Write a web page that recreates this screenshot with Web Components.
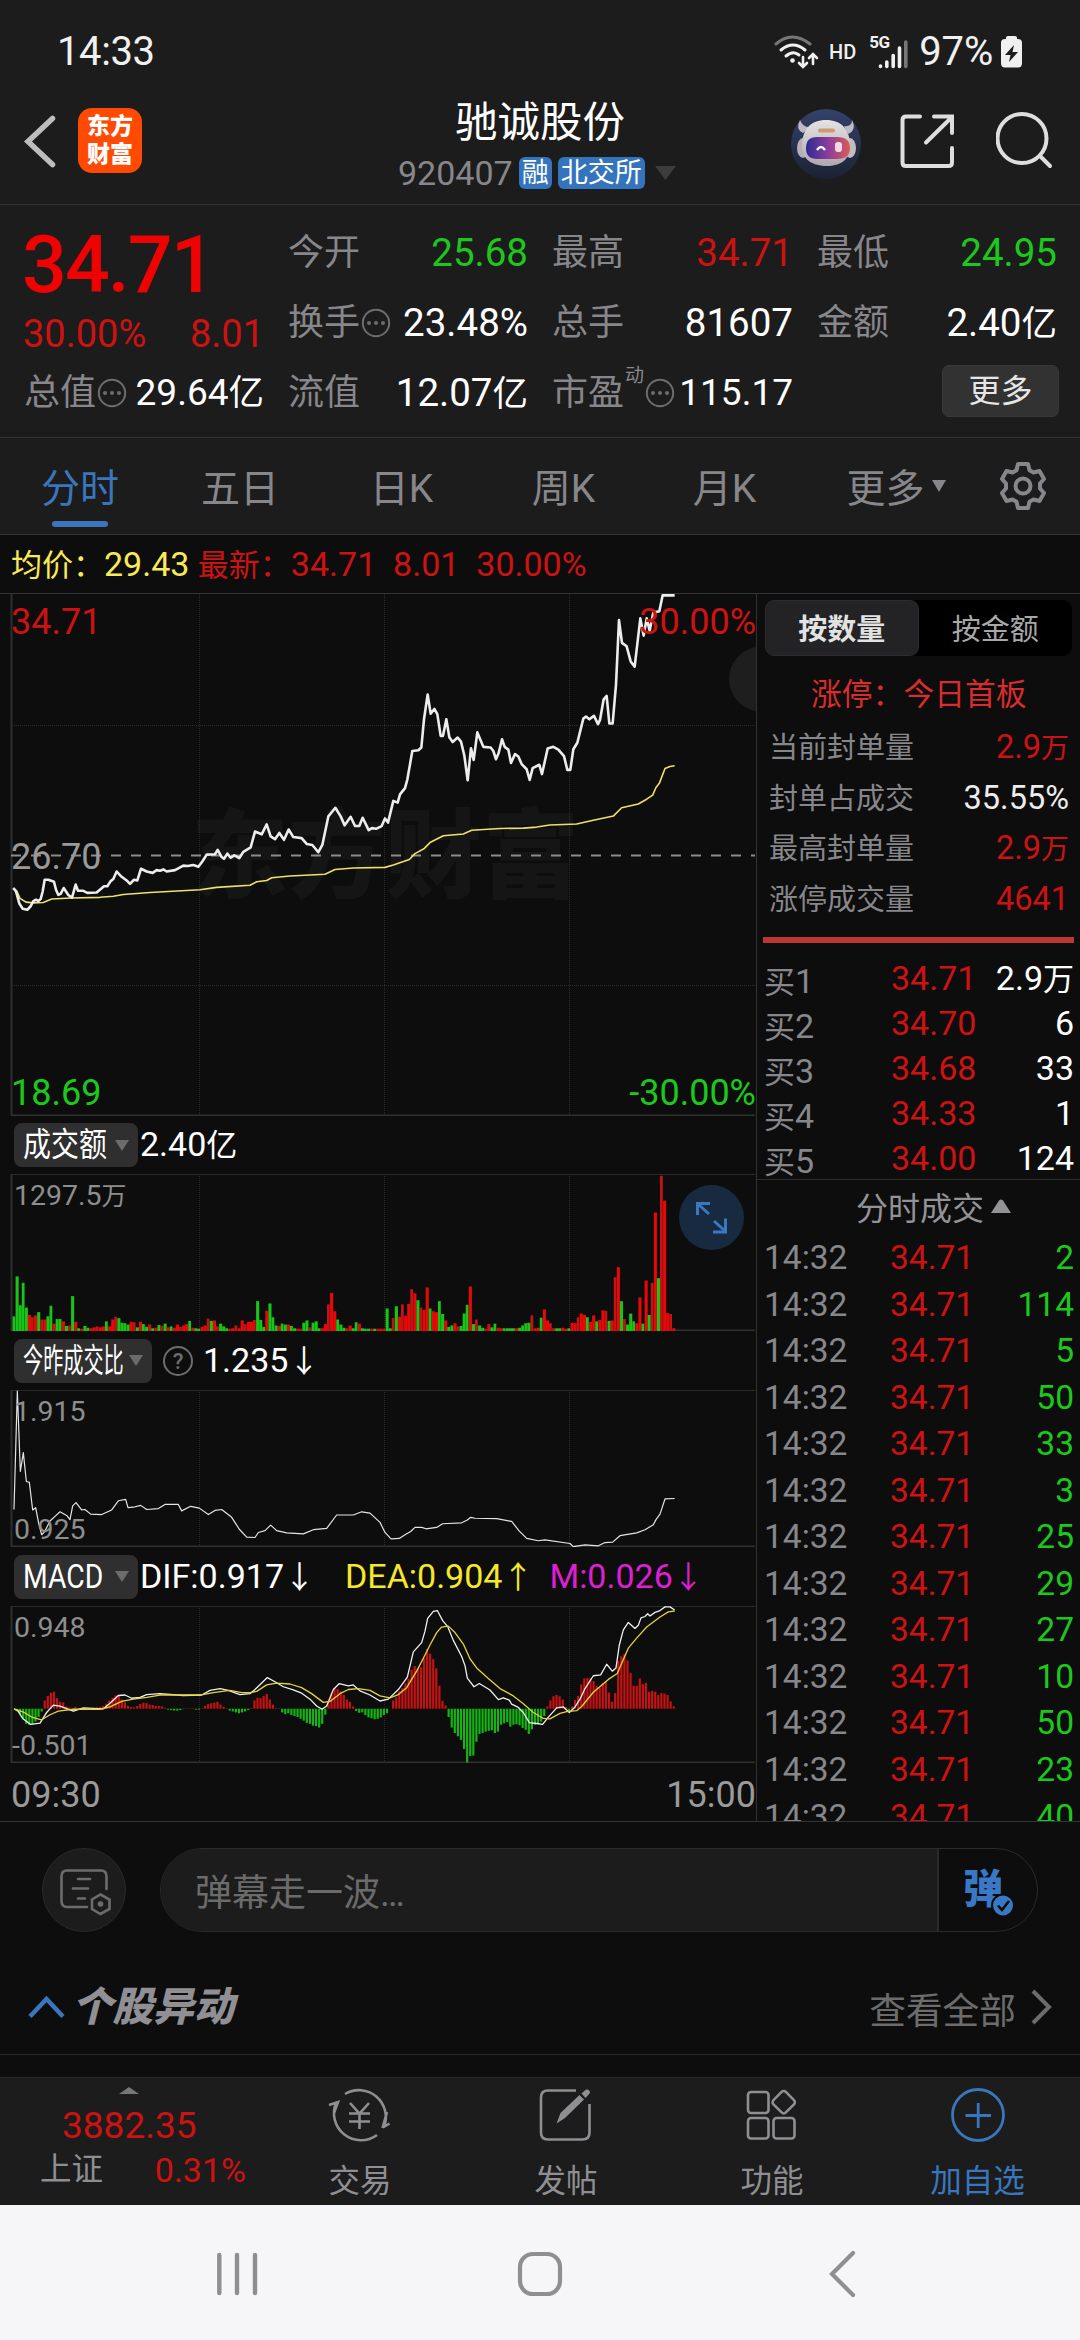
<!DOCTYPE html>
<html lang="zh-CN">
<head>
<meta charset="utf-8">
<title>驰诚股份 920407</title>
<style>
    html, body {
        margin: 0;
        background: #0d0d0d;
    }

    body {
        width: 1080px;
        height: 2340px;
        overflow: hidden;
        font-family: Roboto, "Noto Sans CJK SC", sans-serif;
        color: #fff;
        --panel: #1c1c1c;
        --line: #333335;
        --gray: #87878b;
        --red: #cd1212;
        --green: #1cc81c;
        --blue: #3a76bd;
    }

    main {
        display: grid;
        grid-template-columns: 757px 323px;
        height: 1227px;
        border-bottom: 1px solid var(--line);
    }
</style>
</head>
<body>
    <status-bar></status-bar>
    <stock-header name="驰诚股份" code="920407"></stock-header>
    <quote-panel></quote-panel>
    <period-tabs></period-tabs>
    <price-info></price-info>
    <main>
        <chart-column></chart-column>
        <order-book></order-book>
    </main>
    <danmu-bar></danmu-bar>
    <section-title more="查看全部">个股异动</section-title>
    <tab-bar></tab-bar>
    <nav-bar></nav-bar>

<script>
// Small base class: every element clones its own template into an open shadow root
class BaseElement extends HTMLElement {
    constructor() {
        super();
        this.attachShadow({mode: 'open'});
        const template = document.createElement('template');
        template.innerHTML = this.constructor.html;
        this.shadowRoot.appendChild(template.content.cloneNode(true));
    }

    $(selector) {
        return this.shadowRoot.querySelector(selector);
    }
}

// Chinese units are set a little smaller than the digits before them
const withUnit = (text) => text.replace(/[亿万]/, '<small>$&</small>');

class StatusBar extends BaseElement {
    static html = `
        <style>
            :host {
                display: flex;
                align-items: center;
                box-sizing: border-box;
                height: 92px;
                padding: 11px 57px 0 57px;
                background: var(--panel);
                color: #f0f0f0;
                font-size: 40px;
                line-height: 48px;
            }
            time { flex: 1; letter-spacing: -.4px; }
            svg { display: block; }
            .hd { font-size: 20px; font-weight: 500; margin: 0 13px 0 10px; }
            .level { margin: 0 8px 0 11px; letter-spacing: -.2px; }
            .cell { display: grid; }
            .cell > * { grid-area: 1 / 1; }
            .cell span { font-size: 17px; font-weight: 700; line-height: 20px; margin-top: -2px; letter-spacing: -.6px; }
        </style>
        <time>14:33</time>
        <svg width="46" height="36" viewBox="769 33 46 36" fill="none" stroke="#f0f0f0" stroke-width="3" stroke-linecap="round">
            <path d="M772 43Q788 29 806 43" stroke="#777"/>
            <path d="M777 49Q789 39 801 49M782 55Q789 49 795 54"/>
            <circle cx="788.500" cy="59.500" r="2.300" fill="#f0f0f0" stroke="none"/>
            <path d="M799 56V65M795 62L799 66L803 62M809 63V54M805 57L809 53L813 57" stroke-width="2.600"/>
        </svg>
        <span class="hd">HD</span>
        <div class="cell">
            <span>5G</span>
            <svg width="39" height="36" viewBox="863 33 39 36" fill="none" stroke="#f0f0f0" stroke-width="3.600" stroke-linecap="round">
                <path d="M874.500 65V65.500M880.800 61V65.500M887.200 54.500V65.500M893.500 47V65.500"/>
                <path d="M899.800 41V65.500" stroke="#777"/>
            </svg>
        </div>
        <span class="level">97%</span>
        <svg width="21" height="34" viewBox="1002 34 21 34">
            <path d="M1007 38V36.500Q1007 35 1009 35H1016Q1018 35 1018 36.500V38H1019Q1023 38 1023 42V62Q1023 66.500 1019 66.500H1006Q1002 66.500 1002 62V42Q1002 38 1006 38Z" fill="#f0f0f0"/>
            <path d="M1015 44L1006 54H1011.500L1010 61L1019 51H1013.500Z" fill="#1c1c1c"/>
        </svg>
    `;

    connectedCallback() {
        this.style.paddingRight = '58px';
    }
}

class StockHeader extends BaseElement {
    static html = `
        <style>
            :host {
                display: grid;
                grid-template-columns: 348px 1fr 348px;
                box-sizing: border-box;
                height: 113px;
                border-bottom: 1px solid var(--line);
                background: var(--panel);
            }
            svg { display: block; }
            .left { display: flex; align-items: flex-start; padding: 16px 0 0 22px; }
            .logo {
                display: grid;
                align-content: center;
                width: 64px;
                height: 65px;
                margin-left: 21px;
                border-radius: 14px;
                background: #ff4a03;
                font-size: 23px;
                font-weight: 900;
                line-height: 27.500px;
                text-align: center;
            }
            .title { text-align: center; padding-top: 6px; }
            h1 { margin: 0; font-size: 42.500px; font-weight: 400; line-height: 50px; }
            .sub { display: flex; align-items: center; margin: 8px 0 0 50px; height: 34px; }
            .code { font-size: 34px; color: var(--gray); margin-right: 6px; }
            .tag {
                height: 32px;
                margin-right: 6px;
                padding: 0 3px;
                border-radius: 6px;
                background: #3474bd;
                font-size: 27px;
                line-height: 32px;
            }
            .sub svg { margin-left: 4px; }
            .right { display: flex; gap: 37px; padding: 16px 0 0 59px; }
        </style>
        <div class="left">
            <svg width="35" height="65" viewBox="22 108 35 65"><path d="M52.500 118.500L28 141.500L52.500 164.500" fill="none" stroke="#bdbdbd" stroke-width="5.500" stroke-linecap="round"/></svg>
            <div class="logo"><span>东方</span><span>财富</span></div>
        </div>
        <div class="title">
            <h1></h1>
            <div class="sub">
                <span class="code"></span>
                <span class="tag">融</span>
                <span class="tag">北交所</span>
                <svg width="21" height="14"><path d="M0 0H21L10.500 14Z" fill="#3c3c3c"/></svg>
            </div>
        </div>
        <div class="right">
            <svg width="72" height="72" viewBox="0 0 72 72">
                <defs>
                    <linearGradient id="sky" x2="0" y2="1"><stop stop-color="#33426a"/><stop offset="1" stop-color="#1b2233"/></linearGradient>
                    <linearGradient id="visor"><stop stop-color="#2b2a94"/><stop offset=".5" stop-color="#8a3d9c"/><stop offset="1" stop-color="#dd5a56"/></linearGradient>
                    <linearGradient id="shell" x2="0" y2="1"><stop stop-color="#e6e2e2"/><stop offset="1" stop-color="#aea8ae"/></linearGradient>
                </defs>
                <circle cx="35" cy="36" r="35" fill="url(#sky)"/>
                <path d="M12 25Q4 21 9 12Q12 20 20 19M53 18Q61 19 61 12Q66 22 57 26" fill="#bfbac3"/>
                <ellipse cx="12" cy="40" rx="6" ry="10" fill="#b5b0b6"/>
                <ellipse cx="59" cy="40" rx="6" ry="10" fill="#c2bdc0"/>
                <path d="M35 12C50 12 59 21 59 38C59 52 49 58 36 58C22 58 11 52 11 38C11 21 20 12 35 12Z" fill="url(#shell)"/>
                <rect x="27" y="20.500" width="17" height="4" rx="2" fill="#cf9a70"/>
                <path d="M26 29H46Q59 29 59 40Q59 51 46 51H26Q15 51 15 40Q15 29 26 29Z" fill="url(#visor)"/>
                <path d="M26 42Q30 36 34 42" fill="none" stroke="#fff" stroke-width="2.400"/>
                <rect x="44" y="34" width="7" height="10" rx="3" fill="#f3d9e8"/>
            </svg>
            <svg style="margin-left:-1px" width="56" height="65" viewBox="899 108 56 65" fill="none" stroke="#dedede" stroke-width="4" stroke-linecap="round">
                <path d="M920 116.500H906Q902.500 116.500 902.500 120V162.500Q902.500 166 906 166H948.500Q952 166 952 162.500V148M934 116.500H952V133M951 118L926 142.500"/>
            </svg>
            <svg style="margin-left:4px" width="58" height="65" viewBox="996 108 58 65" fill="none" stroke="#dedede" stroke-width="4" stroke-linecap="round">
                <circle cx="1022" cy="138.500" r="24.500"/>
                <path d="M1040 156L1050 166"/>
            </svg>
        </div>
    `;

    connectedCallback() {
        this.$('h1').textContent = this.getAttribute('name');
        this.$('.code').textContent = this.getAttribute('code');
    }
}

// One label / value pair of the quote panel
class QuoteCell extends BaseElement {
    static html = `
        <style>
            :host { display: flex; align-items: center; height: 70px; font-size: 38.500px; line-height: 46px; white-space: nowrap; }
            :host([tight]) { font-size: 37px; }
            .label { font-size: 36px; color: var(--gray); }
            sup { font-size: 19px; line-height: 20px; color: var(--gray); align-self: flex-start; margin: 8px 0 0 1px; }
            svg { display: block; margin-left: 1px; }
            .value { margin-left: auto; color: var(--tone, #fff); }
            small { font-size: 35.500px; }
            [hidden] { display: none; }
        </style>
        <span class="label"></span>
        <sup hidden></sup>
        <svg hidden width="30" height="30" viewBox="-15 -15 30 30" fill="#6d6d70">
            <circle r="13.200" fill="none" stroke="#6d6d70" stroke-width="2"/>
            <circle cx="-7" r="2"/><circle r="2"/><circle cx="7" r="2"/>
        </svg>
        <span class="value"></span>
    `;

    connectedCallback() {
        this.$('.label').textContent = this.getAttribute('label');
        this.$('.value').innerHTML = withUnit(this.getAttribute('value'));
        if (this.hasAttribute('more')) this.$('svg').removeAttribute('hidden');
        if (this.hasAttribute('sup')) {
            this.$('sup').hidden = false;
            this.$('sup').textContent = this.getAttribute('sup');
        }
        const tone = this.getAttribute('tone');
        if (tone) this.style.setProperty('--tone', `var(--${tone})`);
    }
}

class QuotePanel extends BaseElement {
    static html = `
        <style>
            :host {
                display: grid;
                grid-template-columns: 240px 240px 241px 240px;
                grid-auto-rows: 70px;
                column-gap: 24px;
                box-sizing: border-box;
                height: 233px;
                padding: 13px 23px 0 24px;
                border-bottom: 1px solid var(--line);
                background: var(--panel);
            }
            .now { grid-row: span 2; color: var(--red); }
            .now b { display: block; font-size: 79px; font-weight: 500; line-height: 95px; color: #ee0202; letter-spacing: -2px; margin-left: -2px; }
            .now div { display: flex; justify-content: space-between; font-size: 38px; line-height: 42px; margin-left: -1px; }
            button {
                justify-self: end;
                width: 117px;
                height: 52px;
                margin: 7px -2px 0 0;
                padding: 0;
                border: 1px solid #383838;
                border-radius: 7px;
                background: #323232;
                color: #e6e6e6;
                font: 32px/48px Roboto, "Noto Sans CJK SC", sans-serif;
            }
        </style>
        <div class="now"><b>34.71</b><div><span>30.00%</span><span>8.01</span></div></div>
        <quote-cell label="今开" value="25.68" tone="green"></quote-cell>
        <quote-cell label="最高" value="34.71" tone="red"></quote-cell>
        <quote-cell label="最低" value="24.95" tone="green"></quote-cell>
        <quote-cell label="换手" value="23.48%" more></quote-cell>
        <quote-cell label="总手" value="81607"></quote-cell>
        <quote-cell label="金额" value="2.40亿"></quote-cell>
        <quote-cell label="总值" value="29.64亿" more tight></quote-cell>
        <quote-cell label="流值" value="12.07亿"></quote-cell>
        <quote-cell label="市盈" sup="动" value="115.17" more tight></quote-cell>
        <button>更多</button>
    `;
}

class PeriodTabs extends BaseElement {
    static html = `
        <style>
            :host {
                display: grid;
                grid-template-columns: 160px 160px 163px 161px 161px 182px 1fr;
                box-sizing: border-box;
                height: 97px;
                border-bottom: 1px solid var(--line);
                background: var(--panel);
                color: var(--gray);
                font-size: 39px;
                line-height: 46px;
            }
            div { display: flex; flex-direction: column; align-items: center; padding-top: 28px; }
            .on { color: var(--blue); }
            .on::after { content: ""; width: 56px; height: 6px; margin-top: 9px; border-radius: 3px; background: var(--blue); }
            .more { flex-direction: row; align-items: flex-start; justify-content: center; gap: 7px; }
            .more svg { margin-top: 14px; }
        </style>
        <div class="on">分时</div>
        <div>五日</div>
        <div>日K</div>
        <div>周K</div>
        <div>月K</div>
        <div class="more">更多<svg width="14" height="12"><path d="M0 0H14L7 12Z" fill="#87878b"/></svg></div>
        <div style="padding:22px 21px 0 0">
            <svg width="50" height="52" viewBox="-25 -26 50 52" fill="none" stroke="#87878b" stroke-width="4" stroke-linejoin="round">
                <path d="M-5 -22H5L6.500 -15.800L10.500 -13.500L16.500 -15L21 -7L17 -2.500V2.500L21 7L16.500 15L10.500 13.500L6.500 15.800L5 22H-5L-6.500 15.800L-10.500 13.500L-16.500 15L-21 7L-17 2.500V-2.500L-21 -7L-16.500 -15L-10.500 -13.500L-6.500 -15.800Z"/>
                <circle r="7.500"/>
            </svg>
        </div>
    `;
}

class PriceInfo extends BaseElement {
    static html = `
        <style>
            :host {
                display: block;
                box-sizing: border-box;
                height: 59px;
                padding-left: 11px;
                border-bottom: 1px solid var(--line);
                font-size: 34px;
                line-height: 59px;
                color: var(--red);
            }
            div { white-space: pre; }
            small { font-size: 31px; }
            .avg { color: #f9ea57; }
        </style>
        <div><span class="avg"><small>均价：</small>29.43</span> <small>最新：</small>34.71  8.01  30.00%</div>
    `;
}

// Grid and frame shared by all four charts
function chartFrame(top, bottom) {
    return `
        <path d="M199.500 ${top}V${bottom}M384.500 ${top}V${bottom}M569.500 ${top}V${bottom}" stroke="#2b2b2b" stroke-dasharray="1 1"/>
        <path d="M11.500 ${top}V${bottom}" stroke="#2e2e2e" stroke-width="2"/>
        <path d="M11 ${bottom - .5}H755" stroke="#303030" stroke-width="2"/>`;
}

// Column index to x. One trading minute takes 3.083px.
const minuteX = (i) => 14 + i * 3.0833;

const volume = `32g 119g 56g 105g 51g 35r 30r 34r 41g 25r 25r 32g 55g 16r 26g 26g 21r 11g 12r 76g 20r 6g 5r 11g 7g 6r 8r 10r 8r 10r
    21g 10r 25r 31r 28g 18g 17g 14g 20r 19r 8g 20r 15g 9g 14r 6g 7r 13g 11r 16g 8r 10g 7r 14r 9r 12r 15r 22g 7r 6g
    5g 9r 12r 27r 22g 23r 10r 16g 10g 6g 5r 6r 12r 6r 23r 15r 20r 20r 24r 65g 24g 9g 44r 60g 30g 12g 11r 16g 14g 14r
    11g 6g 5r 5r 18g 23g 8r 18g 21g 6g 6r 15r 58r 83r 43r 25g 14g 7g 6r 12r 6g 19g 16r 6g 5g 5g 5r 5g 5r 5r
    5r 49g 6g 28r 54g 31r 58r 33r 59r 91r 82r 67g 51r 46r 95r 49g 43r 41r 65g 37g 23r 9g 12g 17r 10r 11g 38g 57g 97r 15g
    25r 12g 7g 5r 15r 8g 16g 7r 6r 6g 6g 6g 6g 6r 7g 12g 17g 18g 34r 6r 7r 29g 47r 23r 17r 6r 6g 6g 7r 5r
    6g 18r 17r 30r 38r 35r 30g 20r 34r 21g 24r 45r 44r 22g 23r 117r 139r 65g 26r 14g 38g 21g 17r 73r 16g 110r 35g 105r 258r 115g
    338r 284r 39r 37r 6r`.split(/\s+/);

const macd = [0,-5,-12,-22,-33,-35,-34,-28,-18,-6,18,28,35,37,23,15,14,5,3,-5,4,1,1,1,1,1,2,3,4,6,
    11,18,24,29,30,20,14,6,4,3,6,10,13,12,9,8,6,6,5,2,-2,-3,-4,-4,-3,-1,1,1,1,-2,
    -2,1,6,10,12,13,15,9,4,1,-4,-6,-8,-10,-8,-6,-3,1,18,24,23,28,32,20,9,1,1,-8,-12,-10,
    -14,-16,-18,-22,-26,-31,-33,-37,-38,-41,-33,-13,15,33,45,43,38,30,20,15,5,-5,-9,-8,-14,-19,-21,-23,-22,-19,
    -14,-10,0,18,25,38,45,55,65,85,93,88,90,110,130,120,108,88,50,17,7,-18,-41,-53,-60,-68,-88,-117,-103,-102,
    -72,-55,-53,-50,-48,-47,-53,-50,-35,-32,-29,-39,-35,-34,-36,-42,-46,-55,-45,-35,-32,-28,-16,5,18,27,30,27,20,4,
    -5,5,19,28,53,66,67,66,60,50,46,55,60,35,15,34,104,114,119,105,78,50,50,66,54,56,37,39,37,30,
    34,33,30,16,5];

const priceLine = `40,880 48,890 58,925 68,940 82,943 92,933 100,918 108,914 115,918 122,912 128,890 134,856 145,856 162,862 168,885 175,900 182,897 191,880
    205,900 216,908 227,870 234,888 250,888 262,894 290,893 312,875 322,875 332,860 340,854 350,832 362,845 380,858 390,868 402,856 412,858 423,824
    440,832 458,836 470,828 480,830 490,826 500,832 525,828 550,815 563,816 580,813 595,818 607,803 620,783 645,782 653,769 665,790 672,795 682,780
    692,792 703,785 718,793 730,775 752,762 765,716 785,724 800,695 812,730 825,738 838,720 852,740 866,710 880,732 905,735 920,752 937,755 955,776
    967,755 985,672 1006,647 1022,672 1034,698 1052,673 1065,700 1078,700 1088,676 1106,712 1116,706 1128,708 1145,700 1155,678 1164,690 1180,627
    1193,632 1200,608 1215,590 1222,565 1237,482 1255,480 1264,472 1272,390 1283,318 1292,374 1303,360 1312,375 1322,438 1329,438 1339,390 1348,442
    1358,456 1373,443 1383,455 1393,495 1403,567 1413,474 1421,508 1432,428 1450,470 1472,472 1480,482 1488,506 1496,488 1506,448 1514,470 1525,478
    1533,517 1545,491 1555,498 1565,520 1580,535 1589,566 1598,532 1618,522 1626,549 1643,475 1660,470 1675,478 1692,497 1702,537 1711,537 1720,477
    1732,458 1750,388 1758,382 1768,390 1782,380 1794,404 1800,392 1811,332 1820,322 1828,402 1838,402 1848,290 1857,102 1866,168 1880,178 1892,222
    1904,237 1921,97 1931,147 1940,97 1949,133 1960,80 1978,76 1988,30 2024,30`;

const averageLine = `40,880 50,888 60,910 78,921 100,923 130,922 155,912 215,909 300,907 340,904 370,899 450,893 600,885 650,878 750,872 770,862 800,858
    815,850 870,845 975,840 1005,826 1060,822 1155,820 1180,813 1228,797 1245,780 1273,765 1290,748 1330,728 1390,723 1415,712 1500,707 1570,706
    1610,703 1650,697 1730,694 1780,683 1840,671 1865,647 1915,636 1940,622 1958,610 1968,588 1978,576 1995,533 2010,527 2024,525`;

const ratioLine = `42,870 52,612 61,787 70,746 79,809 88,811 98,871 107,866 116,900 125,925 134,918 150,895 165,885 180,875 200,883 210,892 218,862 228,855
    245,871 255,870 272,880 305,881 335,871 355,851 377,848 384,866 400,865 422,861 440,870 475,868 495,859 535,859 545,873 572,863 598,867 625,881
    645,872 665,870 695,887 718,913 740,930 765,931 775,920 795,916 812,904 830,916 860,921 910,923 940,914 980,911 1010,882 1060,882 1085,875 1110,878
    1140,898 1155,920 1173,934 1198,933 1215,925 1232,918 1245,909 1265,909 1278,912 1310,909 1328,901 1385,899 1402,893 1412,887 1425,889 1490,890
    1535,896 1558,917 1580,933 1615,938 1635,936 1710,944 1720,951 1755,947 1795,949 1815,942 1838,941 1860,927 1910,921 1935,914 1960,903 1968,892
    1980,880 1995,847 2024,846`;

const difLine = `42,1304 55,1310 68,1325 92,1338 120,1335 140,1312 160,1296 180,1298 220,1309 250,1302 310,1304 330,1292 355,1275 375,1274 395,1281 420,1279
    440,1273 480,1271 550,1275 605,1274 630,1264 660,1260 685,1264 720,1273 750,1271 765,1262 785,1248 802,1236 825,1245 850,1256 880,1263 905,1270
    930,1283 950,1298 966,1305 980,1298 1000,1262 1018,1249 1045,1254 1060,1252 1080,1265 1110,1274 1140,1287 1165,1283 1195,1262 1222,1235 1240,1180
    1265,1160 1275,1135 1283,1107 1300,1092 1312,1090 1328,1112 1343,1125 1360,1155 1385,1190 1395,1210 1402,1237 1422,1256 1438,1249 1470,1263
    1495,1284 1510,1280 1528,1285 1535,1294 1555,1301 1570,1312 1588,1334 1610,1336 1628,1338 1645,1322 1670,1302 1690,1300 1708,1312 1725,1300
    1740,1283 1755,1260 1780,1232 1802,1230 1820,1207 1837,1222 1848,1215 1858,1165 1870,1132 1885,1116 1905,1129 1915,1122 1923,1106 1935,1103
    1943,1097 1950,1102 1965,1094 1980,1090 1995,1082 2010,1082 2024,1089`;

const deaLine = `42,1304 70,1311 95,1322 125,1328 150,1317 175,1309 220,1305 300,1305 330,1300 365,1288 400,1283 440,1279 480,1274 600,1274 640,1269 690,1264
    725,1269 750,1269 770,1266 800,1252 830,1248 870,1250 905,1258 935,1271 970,1290 990,1288 1020,1271 1045,1262 1075,1260 1110,1264 1140,1276
    1170,1280 1195,1273 1220,1258 1250,1222 1270,1194 1290,1165 1310,1138 1325,1126 1345,1124 1365,1138 1390,1163 1410,1195 1430,1215 1465,1238
    1500,1260 1540,1276 1570,1293 1600,1312 1630,1325 1650,1326 1680,1314 1700,1310 1730,1308 1745,1299 1780,1268 1825,1240 1852,1227 1868,1200
    1885,1172 1910,1150 1940,1126 1980,1104 2005,1093 2024,1091`;

const line = (points, color, width) =>
    `<polyline points="${points}" fill="none" stroke="${color}" stroke-width="${width}" stroke-linejoin="round" vector-effect="non-scaling-stroke"/>`;

class PriceChart extends BaseElement {
    static html = `
        <style>
            :host, svg { display: block; }
            text { font-size: 36px; }
        </style>
        <svg width="756" height="522" viewBox="0 594 756 522">
            <text x="191" y="890" style="font-size:97px;font-weight:900" fill="#151515">东方财富</text>
            ${chartFrame(594, 1116)}
            <path d="M12 725.500H755M12 985.500H755" stroke="#2b2b2b" stroke-dasharray="1 1"/>
            <circle cx="761.500" cy="679" r="32.500" fill="#1e1e1e"/>
            <path d="M11 855.500H755" stroke="#8c8c8c" stroke-width="2" stroke-dasharray="10 10"/>
            <g transform="translate(0 585) scale(.33333 .34435)">
                ${line(averageLine, '#efe06a', 1.6)}
                ${line(priceLine, '#ededed', 2.6)}
            </g>
            <text x="11" y="634" fill="#cd1212">34.71</text>
            <text x="756" y="634" fill="#cd1212" text-anchor="end">30.00%</text>
            <text x="11" y="869" fill="#9a9a9a">26.70</text>
            <text x="11" y="1105" fill="#1cc81c">18.69</text>
            <text x="756" y="1105" fill="#1cc81c" text-anchor="end">-30.00%</text>
        </svg>
    `;
}

class VolumeChart extends BaseElement {
    static html = `
        <style>
            :host, svg { display: block; }
            text { font-size: 28.500px; }
        </style>
        <svg width="756" height="157" viewBox="0 1174 756 157">
            <path d="M11 1174.500H755" stroke="#2a2a2a"/>
            ${chartFrame(1174, 1331)}
            <text x="14" y="1205" fill="#8e8e8e">1297.5<tspan font-size="25">万</tspan></text>
            <g class="bars"></g>
            <circle cx="711.500" cy="1217.500" r="32.500" fill="#182a40"/>
            <path d="M697.500 1215V1203.500H710M699 1205L709 1214M725.500 1218.500V1232H713M724 1230L714 1221" fill="none" stroke="#3a78c2" stroke-width="3"/>
        </svg>
    `;

    connectedCallback() {
        this.$('.bars').innerHTML = volume.map((item, i) => {
            const h = parseInt(item) * .4592;
            const fill = item.endsWith('g') ? '#17c417' : (i % 3 ? '#e80808' : '#c21414');
            return `<rect x="${minuteX(i) - 1.5}" y="${1331 - h}" width="${i % 3 ? 3.1 : 2.8}" height="${h}" fill="${fill}"/>`;
        }).join('');
    }
}

class RatioChart extends BaseElement {
    static html = `
        <style>
            :host, svg { display: block; }
            text { font-size: 28.500px; }
        </style>
        <svg width="756" height="157" viewBox="0 1390 756 157">
            <path d="M11 1390.500H755" stroke="#2a2a2a"/>
            ${chartFrame(1390, 1547)}
            <g transform="translate(0 1110) scale(.33333 .4592)">${line(ratioLine, '#e4e4e4', 1.2)}</g>
            <text x="14" y="1421" fill="#8e8e8e">1.915</text>
            <text x="14" y="1539" fill="#8e8e8e">0.925</text>
        </svg>
    `;
}

class MacdChart extends BaseElement {
    static html = `
        <style>
            :host, svg { display: block; }
            text { font-size: 28.500px; }
        </style>
        <svg width="756" height="157" viewBox="0 1606 756 157">
            <path d="M11 1606.500H755" stroke="#2a2a2a"/>
            ${chartFrame(1606, 1763)}
            <g class="bars"></g>
            <g transform="translate(0 1110) scale(.33333 .4592)">
                ${line(difLine, '#f0f0f0', 1.3)}
                ${line(deaLine, '#e3d43a', 1.3)}
            </g>
            <text x="14" y="1637" fill="#8e8e8e">0.948</text>
            <text x="12" y="1755" fill="#8e8e8e">-0.501</text>
        </svg>
    `;

    connectedCallback() {
        const zero = 1708.7;
        this.$('.bars').innerHTML = macd.map((v, i) => {
            const h = Math.abs(v) * .4592;
            return `<rect x="${minuteX(i) - 1.2}" y="${v > 0 ? zero - h : zero}" width="2.2" height="${h}" fill="${v > 0 ? '#c61212' : '#14b414'}"/>`;
        }).join('');
    }
}

// Title row of an indicator: dropdown on the left, values in the slot.
// Long names are squeezed to fit the dropdown.
class IndicatorHead extends BaseElement {
    static html = `
        <style>
            :host { display: flex; align-items: center; height: 59px; padding-left: 14px; font-size: 34px; line-height: 44px; white-space: pre; }
            .drop {
                display: flex;
                align-items: center;
                justify-content: space-between;
                box-sizing: border-box;
                height: 44px;
                padding: 0 9px;
                border-radius: 8px;
                background: #2f2f2f;
                font-size: 32.500px;
            }
            .drop span { display: inline-block; transform-origin: 0 50%; }
        </style>
        <div class="drop"><span></span><svg width="14" height="11"><path d="M0 0H14L7 11Z" fill="#6c6c6c"/></svg></div>
        <slot></slot>
    `;

    connectedCallback() {
        const label = this.$('.drop span');
        label.textContent = this.getAttribute('label');
        label.style.width = '0';
        label.style.transform = `scaleX(${this.getAttribute('squeeze')})`;
        this.$('.drop').style.width = this.getAttribute('width') + 'px';
    }
}

class ChartColumn extends BaseElement {
    static html = `
        <style>
            :host { display: block; box-sizing: border-box; border-right: 1px solid var(--line); }
            small { font-size: 31px; }
            .value { margin-left: 2px; }
            .dea { color: #f5e829; margin-left: 30px; }
            .m { color: #dd1fd3; margin-left: 16px; }
            .help { margin: 0 9px 0 10px; }
            .times { display: flex; justify-content: space-between; padding: 0 0 0 11px; font-size: 36px; line-height: 64px; height: 58px; color: #9a9a9a; }
        </style>
        <price-chart></price-chart>
        <indicator-head style="height:58px" label="成交额" squeeze=".86" width="124"><span class="value">2.40<small>亿</small></span></indicator-head>
        <volume-chart></volume-chart>
        <indicator-head label="今昨成交比" squeeze=".62" width="138"><svg class="help" width="32" height="32" viewBox="-16 -16 32 32"><circle r="14" fill="none" stroke="#6d6d6d" stroke-width="2"/><text y="8" text-anchor="middle" font-size="22" font-weight="500" fill="#6d6d6d">?</text></svg><span>1.235<small>↓</small></span></indicator-head>
        <ratio-chart></ratio-chart>
        <indicator-head label="MACD" squeeze=".87" width="124"><span class="value">DIF:0.917<small>↓</small></span><span class="dea">DEA:0.904<small>↑</small></span><span class="m">M:0.026<small>↓</small></span></indicator-head>
        <macd-chart></macd-chart>
        <div class="times"><span>09:30</span><span>15:00</span></div>
    `;
}

class OrderBook extends BaseElement {
    static html = `
        <style>
            :host { display: block; height: 1227px; overflow: hidden; font-size: 34px; white-space: nowrap; }
            small { font-size: 31px; }
            .switch { display: grid; grid-template-columns: 1fr 1fr; margin: 6px 8px 0; border-radius: 9px; background: #000; font-size: 29px; line-height: 56px; text-align: center; color: #a8a8a8; }
            .switch b { box-sizing: border-box; height: 56px; border: 1px solid #2c2c2e; border-radius: 9px; background: #232325; color: #e2e2e2; line-height: 58px; }
            .switch span { padding-top: 2px; height: 54px; }
            .limit { margin-top: 11px; height: 55px; line-height: 55px; font-size: 30.800px; color: #d92c2c; padding-left: 54px; }
            .facts div { display: flex; justify-content: space-between; height: 50.500px; padding: 0 11px 0 12px; line-height: 50.500px; font-size: 32.500px; color: var(--red); }
            .facts div > :first-child { font-size: 29px; color: var(--gray); line-height: 53px; }
            .facts small { font-size: 28px; }
            .bar { height: 6px; margin: 13px 6px 13px; background: #bd3535; }
            .bids { border-bottom: 1px solid #2c2c2c; height: 223px; }
            .row { display: grid; grid-template-columns: 127px 100px 1fr; padding: 0 6px 0 7px; color: var(--red); }
            .row > :first-child { color: var(--gray); }
            .row > :last-child { text-align: right; }
            .bids .row { height: 44.900px; line-height: 44.900px; }
            .bids .row > :first-child { line-height: 50px; }
            .bids .row > :last-child { color: #fff; }
            .head { display: flex; align-items: center; gap: 7px; height: 52px; padding: 0 0 3px 99px; font-size: 32px; color: #939397; }
            .trades .row { height: 46.550px; line-height: 46.550px; grid-template-columns: 126px 100px 1fr; padding-left: 7px; font-size: 33.500px; }
            .trades .row > :last-child { color: var(--green); }
        </style>
        <div class="switch"><b>按数量</b><span>按金额</span></div>
        <div class="limit">涨停：今日首板</div>
        <div class="facts">
            <div><span>当前封单量</span><span>2.9<small>万</small></span></div>
            <div><span>封单占成交</span><span style="color:#ececec">35.55%</span></div>
            <div><span>最高封单量</span><span>2.9<small>万</small></span></div>
            <div><span>涨停成交量</span><span>4641</span></div>
        </div>
        <div class="bar"></div>
        <div class="bids"></div>
        <div class="head">分时成交<svg width="20" height="14"><path d="M0 14L8 1.500Q10 -.5 12 1.500L20 14Z" fill="#939397"/></svg></div>
        <div class="trades"></div>
    `;

    connectedCallback() {
        const bids = [['34.71', '2.9万'], ['34.70', '6'], ['34.68', '33'], ['34.33', '1'], ['34.00', '124']];
        const trades = [2, 114, 5, 50, 33, 3, 25, 29, 27, 10, 50, 23, 40];
        this.$('.bids').innerHTML = bids.map(([price, count], i) =>
            `<div class="row"><span><small>买</small>${i + 1}</span><span>${price}</span><span>${withUnit(count)}</span></div>`).join('');
        this.$('.trades').innerHTML = trades.map((count) =>
            `<div class="row"><span>14:32</span><span>34.71</span><span>${count}</span></div>`).join('');
    }
}

class DanmuBar extends BaseElement {
    static html = `
        <style>
            :host { display: flex; padding: 26px 42px 0; gap: 34px; height: 84px; }
            .set { box-sizing: border-box; width: 84px; height: 84px; border: 1px solid #2a2a2a; border-radius: 50%; background: var(--panel); }
            .input { display: flex; flex: 1; box-sizing: border-box; border: 1px solid #2a2a2a; border-radius: 42px; overflow: hidden; }
            .text { flex: 1; background: var(--panel); padding-left: 34px; font-size: 37px; line-height: 90px; color: #6b6b6b; }
            .send { display: grid; width: 98px; border-left: 2px solid #2a2a2a; color: #3878c5; }
            .send > * { grid-area: 1 / 1; }
            .send b { font-size: 40px; font-weight: 900; line-height: 81px; padding-left: 24px; }
            svg { display: block; }
        </style>
        <div class="set">
            <svg width="82" height="82" viewBox="43 1849 82 82" fill="none" stroke="#6c6c6c" stroke-width="2.600" stroke-linecap="round">
                <path d="M87 1907H67Q61.500 1907 61.500 1901V1876.500Q61.500 1870.500 67 1870.500H101Q106.500 1870.500 106.500 1876.500V1889"/>
                <path d="M78 1879H90M73 1888.500H88M78 1898.500H85"/>
                <path d="M100.500 1894.500L109.500 1899.500V1909L100.500 1914L92 1909V1899.500Z"/>
                <circle cx="100.500" cy="1904" r="2.800" fill="#6c6c6c" stroke="none"/>
            </svg>
        </div>
        <div class="input">
            <div class="text">弹幕走一波…</div>
            <div class="send">
                <b>弹</b>
                <svg width="98" height="82" viewBox="939 1849 98 82">
                    <circle cx="1003" cy="1905.500" r="12" fill="#0d0d0d"/>
                    <circle cx="1003" cy="1905.500" r="10" fill="#3878c5"/>
                    <path d="M998 1905.500L1002 1910L1009 1901" fill="none" stroke="#0d0d0d" stroke-width="2.600"/>
                </svg>
            </div>
        </div>
    `;
}

class SectionTitle extends BaseElement {
    static html = `
        <style>
            :host { display: flex; align-items: center; box-sizing: border-box; height: 123px; padding: 28px 28px 0; border-bottom: 1px solid #2a2a2a; }
            h2 { flex: 1; margin: 0 0 0 7px; padding-bottom: 7px; font-size: 40.500px; font-weight: 900; font-style: italic; color: #8f8f94; }
            .all { font-size: 36.700px; color: #6c6c6c; margin-right: 14px; padding-top: 1px; }
        </style>
        <svg width="37" height="26" fill="none" stroke="#3a76bd" stroke-width="4.500"><path d="M2 22.500L18.500 5L35 22.500"/></svg>
        <h2><slot></slot></h2>
        <span class="all"></span>
        <svg width="22" height="36" fill="none" stroke="#6c6c6c" stroke-width="4"><path d="M3 2L19 18L3 34"/></svg>
    `;

    connectedCallback() {
        this.$('.all').textContent = this.getAttribute('more');
    }
}

class TabBar extends BaseElement {
    static html = `
        <style>
            :host {
                display: grid;
                grid-template-columns: 257px 206px 206px 206px 205px;
                box-sizing: border-box;
                height: 128px;
                margin-top: 22px;
                border-top: 1px solid #2a2a2a;
                background: var(--panel);
                color: #8f8f93;
                font-size: 31.500px;
            }
            svg { display: block; margin: 0 auto; }
            .tab { padding-top: 7px; text-align: center; line-height: 38px; }
            .tab svg { margin-bottom: 18px; }
            .add { color: var(--blue); }
            .index { padding-top: 9px; }
            .index b { display: block; padding-left: 62px; font-size: 37px; font-weight: 400; line-height: 44px; margin-top: 10px; color: var(--red); }
            .index div { display: flex; justify-content: space-between; padding: 0 11px 0 40px; line-height: 44px; margin-top: 0; }
            .index div span + span { font-size: 34px; color: var(--red); }
        </style>
        <div class="index">
            <svg width="20" height="7"><path d="M0 7L10 0L20 7Z" fill="#77777b"/></svg>
            <b>3882.35</b>
            <div><span>上证</span><span>0.31%</span></div>
        </div>
        <div class="tab">
            <svg width="64" height="60" viewBox="329 2085 64 60" fill="none" stroke="#8f8f93" stroke-width="2.600">
                <path d="M346 2094A27 27 0 0 1 385 2127M384 2127.500L390.500 2123.500M383.500 2128L388 2112"/>
                <path d="M378 2135A27 27 0 0 1 337 2103M330 2105L339 2102L335 2113"/>
                <path d="M351 2103L360.500 2113.500L370 2103M350 2113.500H371M350 2121.500H371M360.500 2113V2129"/>
            </svg>交易
        </div>
        <div class="tab">
            <svg width="60" height="60" viewBox="537 2085 60 60" fill="none" stroke="#8f8f93" stroke-width="2.600">
                <path d="M577 2090.500H549Q542 2090.500 542 2097.500V2132.500Q542 2139.500 549 2139.500H583.500Q590.500 2139.500 590.500 2132.500V2104"/>
                <path d="M557.500 2123.500L561.500 2113L580.500 2095L585 2099.500L566 2118ZM582.500 2093.500L587 2089.500Q591 2089 591 2093L586.500 2098Z" fill="#8f8f93" stroke="none"/>
            </svg>发帖
        </div>
        <div class="tab">
            <svg width="60" height="60" viewBox="742 2085 60 60" fill="none" stroke="#8f8f93" stroke-width="2.600">
                <rect x="748" y="2092" width="20.500" height="21" rx="3"/>
                <rect x="748" y="2118" width="20.500" height="20.500" rx="3"/>
                <rect x="773.500" y="2118" width="21" height="20.500" rx="3"/>
                <rect x="775" y="2093.500" width="17.500" height="17.500" rx="3" transform="rotate(45 783.800 2102.200)"/>
            </svg>功能
        </div>
        <div class="tab add">
            <svg width="60" height="60" viewBox="947 2085 60 60" fill="none" stroke="#3a76bd" stroke-width="2.800">
                <circle cx="977" cy="2115" r="25.500"/><path d="M964.500 2115.500H990M977.200 2103V2128"/>
            </svg>加自选
        </div>
    `;
}

class NavBar extends BaseElement {
    static html = `
        <style>
            :host { display: flex; justify-content: space-between; align-items: center; box-sizing: border-box; height: 135px; padding: 2px 222px 0 214px; background: #f6f6f8; }
            .home { margin-right: 5px; }
        </style>
        <svg width="46" height="50" viewBox="0 0 46 50" stroke="#8f8f8f" stroke-width="4.400" stroke-linecap="round"><path d="M5.300 6V44M23 6V44M41 6V44"/></svg>
        <svg class="home" width="50" height="50" viewBox="0 0 50 50" fill="none" stroke="#8f8f8f" stroke-width="4.200"><rect x="5" y="5" width="40" height="40" rx="13"/></svg>
        <svg width="34" height="50" viewBox="0 0 34 50" fill="none" stroke="#8f8f8f" stroke-width="4.200" stroke-linecap="round"><path d="M29 4L8 25L29 46"/></svg>
    `;
}

window.customElements.define('status-bar', StatusBar);
window.customElements.define('stock-header', StockHeader);
window.customElements.define('quote-cell', QuoteCell);
window.customElements.define('quote-panel', QuotePanel);
window.customElements.define('period-tabs', PeriodTabs);
window.customElements.define('price-info', PriceInfo);
window.customElements.define('price-chart', PriceChart);
window.customElements.define('volume-chart', VolumeChart);
window.customElements.define('ratio-chart', RatioChart);
window.customElements.define('macd-chart', MacdChart);
window.customElements.define('indicator-head', IndicatorHead);
window.customElements.define('chart-column', ChartColumn);
window.customElements.define('order-book', OrderBook);
window.customElements.define('danmu-bar', DanmuBar);
window.customElements.define('section-title', SectionTitle);
window.customElements.define('tab-bar', TabBar);
window.customElements.define('nav-bar', NavBar);
</script>
</body>
</html>
